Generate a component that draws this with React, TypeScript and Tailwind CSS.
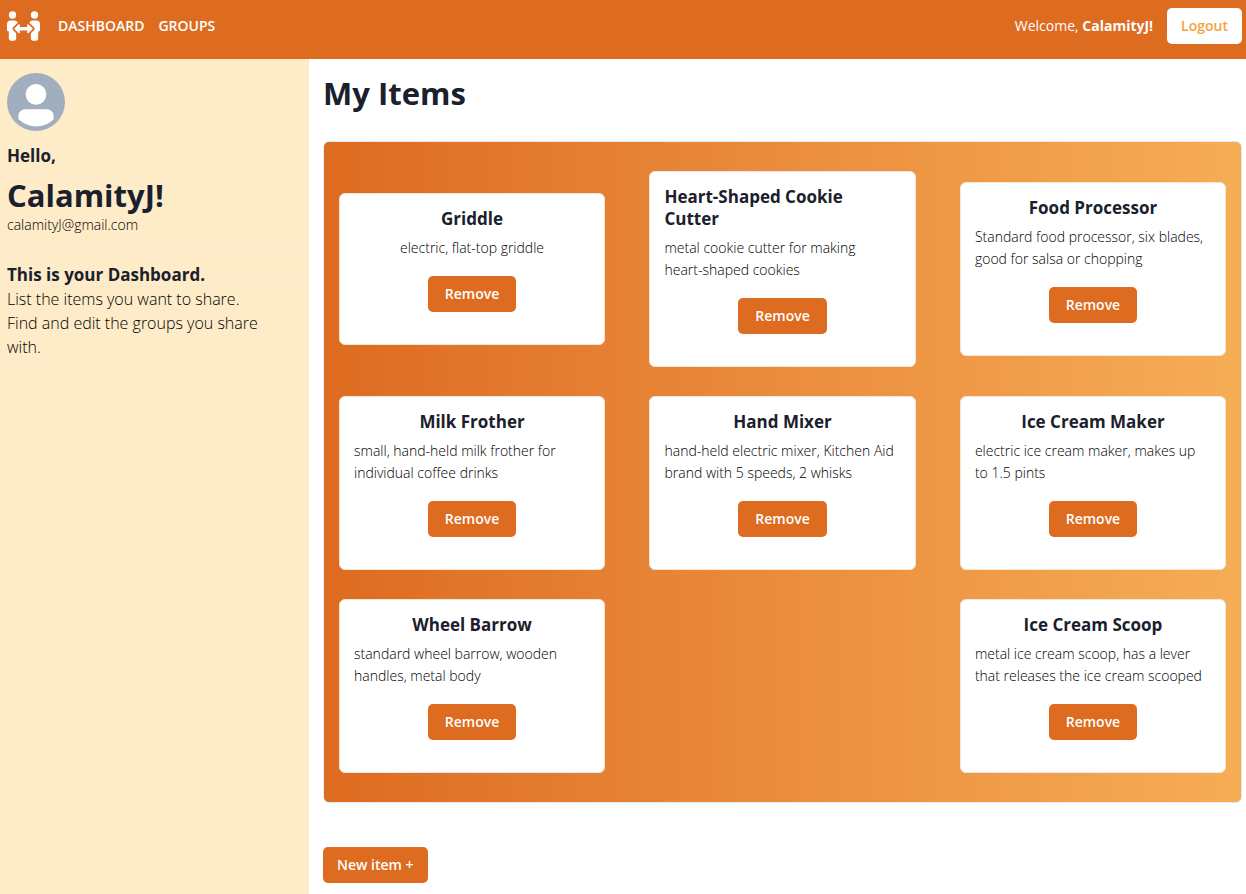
import clsx from "clsx";
import { FaPeopleArrows } from "react-icons/fa";

interface Item {
  name: string;
  description: string;
}

const items: Item[] = [
  { name: "Griddle", description: "electric, flat-top griddle" },
  { name: "Heart-Shaped Cookie Cutter", description: "metal cookie cutter for making\nheart-shaped cookies" },
  { name: "Food Processor", description: "Standard food processor, six blades, good for salsa or chopping" },
  { name: "Milk Frother", description: "small, hand-held milk frother for individual coffee drinks" },
  { name: "Hand Mixer", description: "hand-held electric mixer, Kitchen Aid brand with 5 speeds, 2 whisks" },
  { name: "Ice Cream Maker", description: "electric ice cream maker, makes up to 1.5 pints" },
  { name: "Wheel Barrow", description: "standard wheel barrow, wooden handles, metal body" },
  { name: "Ice Cream Scoop", description: "metal ice cream scoop, has a lever that releases the ice cream scooped" },
];

function Avatar() {
  return (
    <span className="flex size-[58px] items-center justify-center overflow-hidden rounded-full bg-[#a0aec0] text-white">
      <svg viewBox="0 0 128 128" className="size-full" role="img" aria-label="avatar">
        <path
          fill="currentColor"
          d="M103,102.1388 C93.094,111.92 79.3504,118 64.1638,118 C48.8056,118 34.9294,111.768 25,101.7892 L25,95.2 C25,86.8096 31.981,80 40.6,80 L87.4,80 C96.019,80 103,86.8096 103,95.2 L103,102.1388 Z"
        />
        <circle fill="currentColor" cx="64" cy="47" r="23" />
      </svg>
    </span>
  );
}

function ItemCard({ item }: { item: Item }) {
  const multiline = item.description.includes("\n");
  return (
    <li className="flex shrink-0 grow-0 basis-[30%] flex-col items-center rounded-md border border-[#f0e6dc] bg-white px-3.5 pt-3.5 pb-8">
      <h2 className="text-[17px] leading-[22px] font-bold">{item.name}</h2>
      <p
        className={clsx(
          "mt-[7px] text-sm leading-[22px] font-light whitespace-pre-line text-black",
          multiline && "w-full",
        )}
      >
        {item.description}
      </p>
      <button type="button" className="mt-[17px] h-9 rounded-[5px] bg-[#dd6b20] px-[17px] text-sm font-semibold text-white">
        Remove
      </button>
    </li>
  );
}

export default function App() {
  return (
    <div className="flex min-h-screen flex-col bg-white font-['Open_Sans','Noto_Sans',sans-serif] text-[#1a202c]">
      <header className="flex h-[59px] items-start justify-between bg-[#dd6b20] pt-2 pr-1 pl-[7px] text-white">
        <nav className="flex h-9 items-center gap-3.5 text-sm font-semibold">
          <FaPeopleArrows className="mr-1 h-[30px] w-[33px]" aria-hidden="true" />
          <a href="#dashboard">DASHBOARD</a>
          <a href="#groups">GROUPS</a>
        </nav>
        <div className="flex items-center gap-3.5 text-sm">
          <p>
            Welcome, <strong className="font-bold">CalamityJ!</strong>
          </p>
          <button type="button" className="h-9 rounded-[5px] bg-white px-3.5 font-semibold text-[#f6a23c]">
            Logout
          </button>
        </div>
      </header>

      <div className="flex flex-1">
        <aside className="w-[24.8%] shrink-0 bg-[#feebc8] pt-3.5 pr-3.5 pl-[7px]">
          <Avatar />
          <p className="mt-3.5 text-[17px] leading-[22px] font-bold">Hello,</p>
          <h2 className="mt-2 text-[31px] leading-10 font-bold">CalamityJ!</h2>
          <p className="text-sm leading-5 font-light text-black">calamityJ@gmail.com</p>
          <hr className="mt-3.5 border-[#f7e8cf]" />
          <h3 className="mt-3.5 text-[17px] leading-[22px] font-bold">This is your Dashboard.</h3>
          <hr className="border-[#f7e8cf]" />
          <p className="text-base leading-6 font-light text-black">List the items you want to share.</p>
          <p className="text-base leading-6 font-light text-black">Find and edit the groups you share with.</p>
        </aside>

        <main className="min-w-0 flex-1 pt-3.5 pr-1 pb-2 pl-3.5">
          <h1 className="text-[31px] leading-10 font-bold">My Items</h1>
          <ul className="mt-7 flex flex-wrap items-center justify-between gap-y-[29px] rounded-md border border-[#e2e8f0] bg-linear-to-r from-[#dd6b20] to-[#f6ad55] px-[15px] py-[29px]">
            {items.map((item) => (
              <ItemCard key={item.name} item={item} />
            ))}
          </ul>
          <button type="button" className="mt-11 h-9 rounded-[5px] bg-[#dd6b20] px-3.5 text-sm font-semibold text-white">
            New item +
          </button>
        </main>
      </div>
    </div>
  );
}
